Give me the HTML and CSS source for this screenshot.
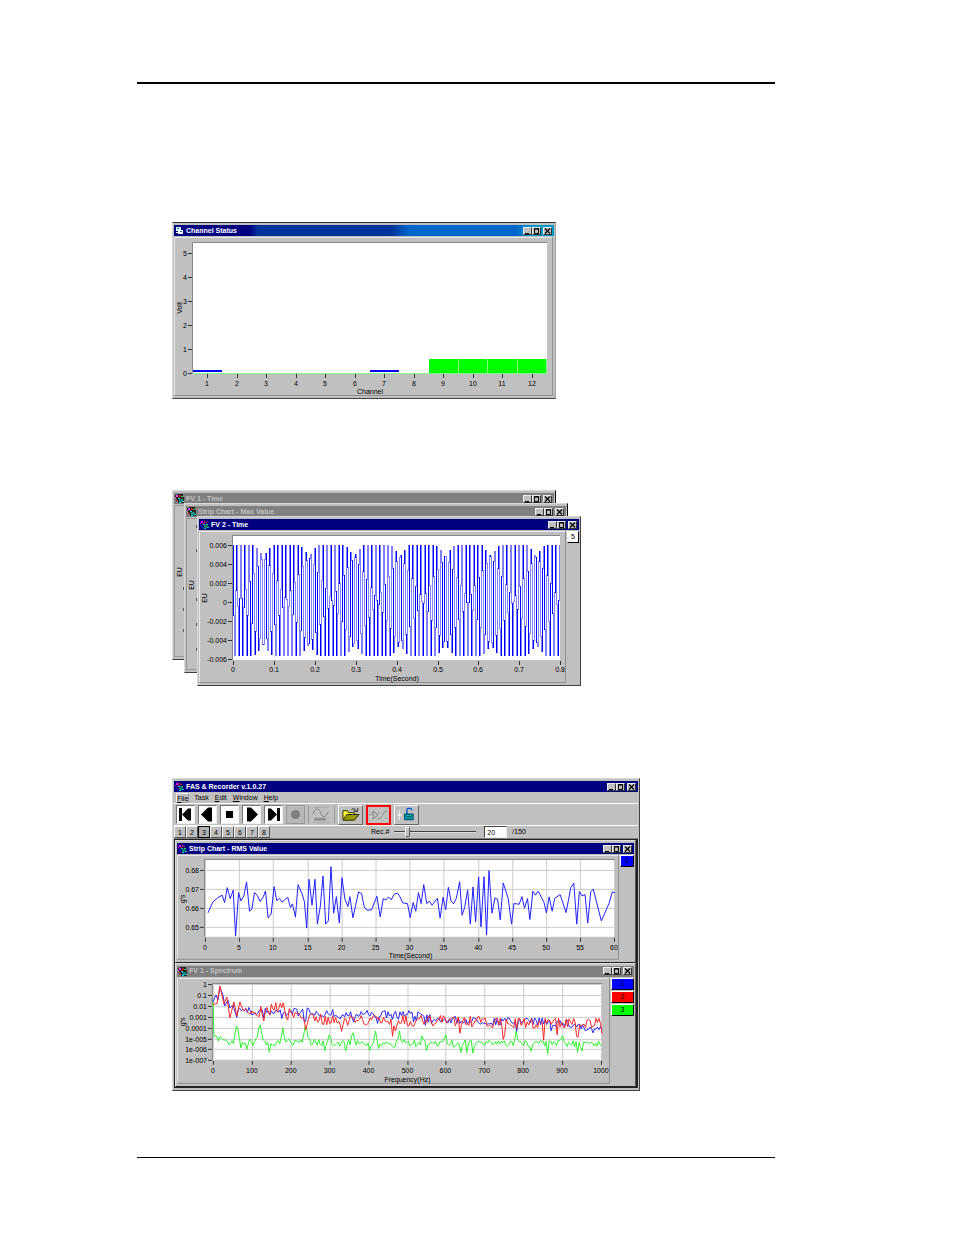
FILE: index.html
```html
<!DOCTYPE html>
<html lang="en">
<head>
<meta charset="utf-8">
<title>FAS &amp; Recorder displays</title>
<link rel="stylesheet" href="styles.css">
</head>
<body>
<svg width="0" height="0" class="symbols" aria-hidden="true">
  <symbol id="app" viewBox="0 0 9 9">
    <path d="M1 1h2v2H1zM0 3h1v1H0z" fill="#f0f"/><path d="M4 1l3 2M3 4l2-2" stroke="#d22" fill="none"/>
    <path d="M4 5h4v3H4z" fill="#066"/><path d="M3 4h2v1H3zM7 7h2v1H7zM4 8h2v1H4z" fill="#0cc"/><path d="M6 4h2v1H6zM5 6h1v1H5z" fill="#0c6"/><path d="M1 5l2 3" stroke="#22c" fill="none"/>
  </symbol>
  <symbol id="app-dim" viewBox="0 0 9 9">
    <path d="M2 0h6v3h1v6H3V7H1V4H0V1h2z" fill="#222"/><path d="M1 1h2v2H1zM0 3h1v1H0z" fill="#f4f"/><path d="M4 1l3 2M3 4l2-2" stroke="#e22" fill="none"/>
    <path d="M4 5h4v3H4z" fill="#088"/><path d="M3 4h2v1H3zM7 7h2v1H7zM4 8h2v1H4z" fill="#0dd"/><path d="M6 2h2v1H6z" fill="#0c6"/><path d="M1 5l2 3" stroke="#e44" fill="none"/>
  </symbol>
  <symbol id="sheet" viewBox="0 0 9 9"><path d="M1 1h5v4H1z" fill="#dff"/><path d="M3 4h5v4H3z" fill="#fff"/><path d="M2 2h2v1H2zM5 5h2v1H5z" fill="#088"/><path d="M1 6h2v1H1z" fill="#fff"/></symbol>
  <symbol id="min" viewBox="0 0 7 6"><path d="M1 5.500h4" stroke="#000"/></symbol>
  <symbol id="max" viewBox="0 0 7 6"><path d="M1.500 .5h4v5h-4zM1 1h5" fill="none" stroke="#000"/></symbol>
  <symbol id="close" viewBox="0 0 7 6"><path d="M1 .5l5 5M6 .5l-5 5" stroke="#000" stroke-width="1.200"/></symbol>
</svg>

<main class="page">
  <section class="window first">
    <header class="title wide-blue"><svg class="ico"><use href="#sheet"/></svg><h2>Channel Status</h2><span class="controls"></span></header>
    <div class="body"><svg class="chart" id="channels" viewBox="0 0 380 160" role="img" aria-label="Channel status"></svg></div>
  </section>

  <div class="stack">
    <section class="window back">
      <header class="title dim"><svg class="ico"><use href="#app-dim"/></svg><h2>FV 1 - Time</h2><span class="controls"></span></header>
      <div class="body"><svg class="chart" id="back1" viewBox="0 0 380 153" aria-hidden="true"></svg></div>
    </section>
    <section class="window back middle">
      <header class="title dim"><svg class="ico"><use href="#app-dim"/></svg><h2>Strip Chart - Max Value</h2><span class="controls"></span></header>
      <div class="body"><svg class="chart" id="back2" viewBox="0 0 380 153" aria-hidden="true"></svg></div>
    </section>
    <section class="window front">
      <header class="title"><svg class="ico"><use href="#app"/></svg><h2>FV 2 - Time</h2><span class="controls"></span></header>
      <div class="body"><svg class="chart" id="time" viewBox="0 0 368 153" role="img" aria-label="Time signal"></svg>
        <div class="legend slim"><button class="white">5</button></div></div>
    </section>
  </div>

  <section class="window recorder">
    <header class="title"><svg class="ico"><use href="#app"/></svg><h1>FAS &amp; Recorder v.1.0.27</h1><span class="controls"></span></header>
    <nav class="menu"><button class="on"><u>F</u>ile</button><button>Task</button><button><u>E</u>dit</button><button><u>W</u>indow</button><button><u>H</u>elp</button></nav>
    <div class="toolbar">
      <button class="play" aria-label="First"><svg viewBox="0 0 17 17"><path d="M2 2h3v13H2zM5 8.500l6-6h3v12h-3z"/></svg></button>
      <button class="play" aria-label="Back"><svg viewBox="0 0 17 17"><path d="M2 8.500l7-7h4v14H9z"/></svg></button>
      <button class="play" aria-label="Stop"><svg viewBox="0 0 17 17"><path d="M5 5h7v7H5z"/></svg></button>
      <button class="play" aria-label="Forward"><svg viewBox="0 0 17 17"><path d="M15 8.500l-7-7H4v14h4z"/></svg></button>
      <button class="play" aria-label="Last"><svg viewBox="0 0 17 17"><path d="M12 2h3v13h-3zM12 8.500l-6-6H3v12h3z"/></svg></button>
      <button class="play off" aria-label="Record"><svg viewBox="0 0 17 17"><circle cx="8.500" cy="8.500" r="4.600" fill="#808080"/></svg></button>
      <button class="scope" aria-label="Scope"><svg viewBox="0 0 26 19"><path d="M4 1.500h17M4 17.500h17" stroke="#aaa"/><path d="M4 9c2-7 6-8 8-2s5 6 8-1M6 13h2v2H6zM9 13h2v2H9zM12 13h2v2h-2zM15 13h2v2h-2z" fill="none" stroke="#808080"/></svg></button>
      <button class="tool" aria-label="Open"><svg viewBox="0 0 24 19"><path d="M4 14V5h5l1 2h6v3" fill="#ff3" stroke="#220"/><path d="M4 15l4-6h13l-5 6z" fill="#990" stroke="#220"/><path d="M13 4c2-2 4-1 5 1M20 2l-1 4-4-1" fill="none" stroke="#222"/></svg></button>
      <button class="tool red" aria-label="Clear"><svg viewBox="0 0 21 16"><path d="M1 8h4M5 4l5 4-5 4zM10 6c4 0 4 6 9 6M10 12c4 0 5-8 9-8" fill="none" stroke="#808080"/><path d="M2 9h3M11 7c4 0 4 6 8 6" stroke="#fff" fill="none" stroke-width=".6"/></svg></button>
      <button class="tool" aria-label="Unlock"><svg viewBox="0 0 24 19"><path d="M4.500 4v11M2 9.500h5" stroke="#eee"/><circle cx="4.500" cy="9.500" r="1.500" fill="#eee"/><path d="M12.500 9V4q0-1.500 2-1.500h1q2 0 2 2" fill="none" stroke="#05c" stroke-width="1.500"/><path d="M10 8.500h9v6h-9z" fill="#0aa" stroke="#036"/><path d="M12 11.500h5" stroke="#035"/></svg></button>
    </div>
    <div class="records">
      <div class="tabs"><button>1</button><button>2</button><button class="on">3</button><button>4</button><button>5</button><button>6</button><button>7</button><button>8</button></div>
      <label class="rec" for="pos">Rec.#</label>
      <input type="range" id="pos" min="0" max="150" value="20">
      <input type="text" class="num" value="20" aria-label="Record number"><span>/150</span>
    </div>
    <div class="workspace">
      <section class="window child">
        <header class="title"><svg class="ico"><use href="#app"/></svg><h2>Strip Chart - RMS Value</h2><span class="controls"></span></header>
        <div class="body"><svg class="chart" id="strip" viewBox="0 0 444 106" role="img" aria-label="RMS value"></svg>
          <div class="legend mid"><button class="blue">1</button></div></div>
      </section>
      <section class="window child">
        <header class="title dim"><svg class="ico"><use href="#app-dim"/></svg><h2>FV 1 - Spectrum</h2><span class="controls"></span></header>
        <div class="body"><svg class="chart" id="spectrum" viewBox="0 0 435 107" role="img" aria-label="Spectrum"></svg>
          <div class="legend large"><button class="blue">1</button><button class="red">2</button><button class="green">3</button></div></div>
      </section>
    </div>
  </section>
</main>
<script src="charts.js"></script>
</body>
</html>
```
FILE: styles.css
```css
* { box-sizing: border-box; }
body { margin: 0; background: #fff; color: #000; font: 7px/8px "Liberation Sans", Arial, sans-serif; }
h1, h2 { margin: 0; font: inherit; }
button, input { margin: 0; padding: 0; font: inherit; color: inherit; border: 0; background: none; border-radius: 0; }
svg { display: block; }
.symbols { position: absolute; }

.page { margin: 82px 179px 76px 137px; padding: 138px 0 66px 35px; border-top: 2px solid #000; border-bottom: 1px solid #000; }

.window { width: 100%; max-width: 384px; padding: 2px 1px 1px; background: #c0c0c0; border: 1px solid; border-color: #d8d8d8 #404040 #404040 #d8d8d8; }
.first { border-top-color: #303030; border-right-color: #a0a0a0; }
.title { display: flex; align-items: center; height: 12px; padding: 0 2px 0 1px; gap: 2px; color: #fff; background: #000080; border-bottom: 1px solid #c0c0c0; font-weight: bold; }
.title.wide-blue { background: linear-gradient(90deg, #000080 20%, #003399 22%, #003399 57%, #0066cc 62%, #0066cc 90%, #0099cc 94%); }
.title.dim { background: #808080; color: #c0c0c0; }
.ico { width: 9px; height: 9px; flex: none; }
.controls { display: flex; margin-left: auto; }
.controls button { width: 9px; height: 8px; background: #c0c0c0; border: 1px solid; border-color: #eee #333 #333 #eee; }
.controls button svg { width: 7px; height: 6px; }
.controls button:last-child { margin-left: 2px; }
.body { display: flex; align-items: flex-start; }
.chart { flex: 1; min-width: 0; }
.chart text { font: 7px "Liberation Sans", Arial, sans-serif; fill: #000; }

.legend { flex: none; display: grid; gap: 1px; }
.legend button { height: 12px; border: 1px solid; border-color: #fff #000 #000 #fff; }
.legend .white { background: #fff; }
.legend .blue { background: #00f; }
.legend .red { background: #f00; }
.legend .green { background: #0f0; }
.slim { width: 12px; }
.mid { width: 14px; }
.large { width: 23px; }

.stack { display: grid; justify-items: start; margin-top: 91px; }
.stack .window { grid-area: 1 / 1; align-self: start; }
.stack .back { border-right-color: #000; }
.stack .middle { margin: 13px 0 0 12px; }
.stack .front { margin: 26px 0 0 25px; }

.recorder { max-width: 468px; margin-top: 92px; }
.menu { display: flex; gap: 4px; height: 11px; padding: 0 2px; border-bottom: 1px solid #fff; }
.menu button { padding: 0 1px; }
.menu .on { border: 1px solid; border-color: #eee #999 #999 #eee; line-height: 7px; padding: 0; }
.toolbar { display: flex; gap: 3px; height: 22px; padding: 1px 2px; border-bottom: 1px solid #fff; }
.play { width: 19px; height: 19px; background: #fff; border: 1px solid; border-color: #777 #eee #eee #777; }
.play svg { width: 17px; height: 17px; }
.play.off { background: #b8b8b8; border-color: #999; }
.scope { width: 27px; border: 1px solid; border-color: #c0c0c0 #999; }
.scope svg { width: 25px; height: 18px; }
.tool { width: 25px; height: 20px; border: 1px solid; border-color: #f4f4f4 #666 #666 #f4f4f4; }
.tool svg { width: 23px; height: 18px; }
.tool.red { border: 2px solid #f00; }
.tool.red svg { width: 21px; height: 16px; }

.records { display: flex; align-items: center; height: 13px; border-bottom: 1px solid #808080; }
.tabs { display: flex; flex: none; }
.tabs button { width: 12px; height: 12px; border: 1px solid; border-color: #f4f4f4 #555 #555 #f4f4f4; line-height: 9px; }
.tabs .on { border-color: #000; background: #b0b0b0; }
.rec { margin-left: 101px; }
input[type=range] { appearance: none; width: 82px; height: 10px; margin: 0 8px 0 5px; background: linear-gradient(#444 50%, #ddd 50%) center / 100% 2px no-repeat; }
input[type=range]::-webkit-slider-thumb { appearance: none; width: 5px; height: 10px; background: #c0c0c0; border: 1px solid; border-color: #eee #555 #555 #eee; border-radius: 0 0 2px 2px; }
.num { width: 23px; height: 12px; margin-right: 5px; padding: 0 2px; background: #fff; border: 1px solid; border-color: #444 #eee #eee #444; }
.workspace { border: 1px solid #222; border-right-width: 2px; margin-bottom: 1px; }
.child { max-width: none; border-color: #e0e0e0 #555 #222 #e0e0e0; }
```
FILE: charts.js
```js
const NS = 'http://www.w3.org/2000/svg';

function add(svg, tag, attrs, text) {
  const el = document.createElementNS(NS, tag);
  for (const k in attrs) el.setAttribute(k, attrs[k]);
  if (text !== undefined) el.textContent = text;
  svg.appendChild(el);
}

// Panel, plot area, axis ticks and optional grid.
function frame(svg, c) {
  const [w, h] = svg.getAttribute('viewBox').split(' ').slice(2).map(Number);
  add(svg, 'path', { d: `M.5 ${h}V.5H${w}`, stroke: '#e8e8e8', fill: 'none' });
  add(svg, 'path', { d: `M${w - 1.5} 0V${h - 1.5}H0`, stroke: '#909090', fill: 'none' });
  add(svg, 'rect', { x: c.x0, y: c.y0, width: c.x1 - c.x0, height: c.y1 - c.y0, fill: '#fff' });
  add(svg, 'path', { d: `M${c.x0 - .5} ${c.y1}V${c.y0 - .5}H${c.x1}`, stroke: '#888', fill: 'none' });
  c.ys.forEach(([y, label]) => {
    if (c.grid) add(svg, 'path', { d: `M${c.x0} ${y}H${c.x1}`, stroke: '#ccc' });
    add(svg, 'path', { d: `M${c.x0 - 5} ${y}h4`, stroke: '#333' });
    add(svg, 'text', { x: c.x0 - 6, y: y + 2.5, 'text-anchor': 'end' }, label);
  });
  c.xs.forEach(([x, label]) => {
    if (c.grid) add(svg, 'path', { d: `M${x} ${c.y0}V${c.y1}`, stroke: '#ccc' });
    add(svg, 'path', { d: `M${x} ${c.y1 + 1}v4`, stroke: '#333' });
    add(svg, 'text', { x: x - .5, y: c.y1 + c.drop, 'text-anchor': 'middle' }, label);
  });
  add(svg, 'text', { x: c.tx, y: h - 3, 'text-anchor': 'middle' }, c.xt);
  add(svg, 'text', { transform: `translate(${c.yx} ${c.yy}) rotate(-90)`, 'text-anchor': 'middle' }, c.yt);
}

const steps = (labels, start, step) => labels.map((l, i) => [start + Math.round(i * step), l]);

// Channel status bars
const ch = document.getElementById('channels');
frame(ch, { x0: 19, y0: 6, x1: 373, y1: 136, drop: 13, ys: steps([0, 1, 2, 3, 4, 5], 136.5, -24),
  xs: steps([1, 2, 3, 4, 5, 6, 7, 8, 9, 10, 11, 12], 33.5, 29.5), xt: 'Channel', tx: 196, yt: 'Volt', yx: 8, yy: 71 });
add(ch, 'path', { d: 'M19 136.5H373', stroke: '#80ff80' });
[1, 7].forEach(n => add(ch, 'rect', { x: 19 + 29.5 * (n - 1), y: 133, width: 29, height: 2, fill: '#00f' }));
[9, 10, 11, 12].forEach(n => add(ch, 'rect', { x: 19 + 29.5 * (n - 1), y: 122, width: 29, height: 14, fill: '#0f0' }));

// Partly covered windows
[['back1', 10, [82, 103, 124]], ['back2', 11, [7, 31, 80, 105, 130]]].forEach(([id, x, ys]) => {
  const svg = document.getElementById(id);
  add(svg, 'path', { d: 'M.5 153V.5H380M379 0V151.500H0', stroke: '#999', fill: 'none' });
  add(svg, 'text', { transform: 'translate(8 67) rotate(-90)', 'text-anchor': 'middle' }, 'EU');
  ys.forEach(y => add(svg, 'path', { d: `M${x - .5} ${y}v3`, stroke: '#555' }));
});

// Time signal: one vertical run per column
const tm = document.getElementById('time');
frame(tm, { x0: 34, y0: 5, x1: 361, y1: 129, drop: 12,
  ys: steps(['0.006', '0.004', '0.002', '0', '-0.002', '-0.004', '-0.006'], 14.5, 19),
  xs: steps(['0', '0.1', '0.2', '0.3', '0.4', '0.5', '0.6', '0.7', '0.8'], 34.5, 40.9), xt: 'Time(Second)', tx: 198, yt: 'EU', yx: 8, yy: 67 });
const wave = x => 69 - 55 * Math.max(-1, Math.min(1, 1.12 * Math.sin((x + 1.2) * 2 * Math.PI / 4.09)));
for (let x = 0; x < 327; x++) {
  const a = wave(x), b = wave(x + 1);
  const top = Math.round(Math.min(a, b)), bottom = Math.round(Math.max(a, b)) + 1;
  add(tm, 'rect', { x: 34 + x, y: top, width: 1, height: bottom - top, fill: (x * .37) % 1 < .35 ? '#0000ff' : '#8080ff' });
}

// RMS strip chart, in thirds of a pixel
const st = document.getElementById('strip');
frame(st, { x0: 28, y0: 5, x1: 439, y1: 82, drop: 13, grid: true, ys: steps(['0.68', '0.67', '0.66', '0.65'], 15.5, 19),
  xs: steps([0, 5, 10, 15, 20, 25, 30, 35, 40, 45, 50, 55, 60], 28.5, 34.2), xt: 'Time(Second)', tx: 234, yt: "g's", yx: 8, yy: 44 });
const left = '120,231 135,198 150,185 163,178 170,200 178,155 187,188 196,163 203,301 212,170 219,195 228,180 236,138 245,226 252,220 260,170 268,178 277,197 286,184 293,165 301,246 310,235 319,152 327,195 335,187 343,199 360,184 368,215 374,204 383,244 391,146 403,173 410,198 417,277 424,130 433,208 442,130 449,265 458,210 466,120 474,265 482,255 490,92 498,232 506,182 515,262 523,125 532,190 541,212 547,182 556,246 565,205 573,168 582,173 590,213 598,223 612,222 628,181 638,243 647,188 655,192 663,183 671,192 680,175 690,172';
const right = '0,180 10,201 24,203 32,245 41,200 49,226 57,170 65,203 73,146 82,203 90,196 98,208 114,187 122,247 131,184 139,222 147,154 155,196 163,203 171,187 181,137 188,238 196,215 205,162 213,265 221,153 229,258 238,123 245,273 254,122 262,298 269,104 278,232 287,186 295,190 303,252 312,141 327,188 337,265 344,203 360,205 368,182 376,217 385,188 392,251 401,166 409,178 417,166 434,198 442,231 450,183 459,226 467,187 483,176 501,230 515,155 524,142 533,265 541,167 549,180 558,176 566,262 575,167 583,160 607,255 630,203 640,168 648,170';
const pts = (s, dx) => s.split(' ').map(p => p.split(',').map(Number)).map(([x, y]) => [(x + dx) / 3 - 9, y / 3 - 19]);
const line = (svg, p, stroke) => add(svg, 'polyline', { points: p.map(q => q[0].toFixed(1) + ',' + q[1].toFixed(1)).join(' '), stroke, fill: 'none', 'stroke-width': 1 });
line(st, pts(left, 0).concat(pts(right, 696)), '#2020ff');

// Spectrum: smooth trend plus repeatable noise
const sp = document.getElementById('spectrum');
frame(sp, { x0: 36, y0: 6, x1: 426, y1: 82, drop: 13, grid: true,
  ys: steps(['1', '0.1', '0.01', '0.001', '0.0001', '1e-005', '1e-006', '1e-007'], 6.5, 10.9),
  xs: steps([0, 100, 200, 300, 400, 500, 600, 700, 800, 900, 1000], 36.5, 38.9), xt: 'Frequency(Hz)', tx: 231, yt: "g's", yx: 8, yy: 44 });
let seed = 7;
const rnd = () => (seed = (seed * 16807) % 2147483647) / 2147483647;
function trend(k, x) {
  for (let i = 1; i < k.length; i++)
    if (x <= k[i][0]) return k[i - 1][1] + (k[i][1] - k[i - 1][1]) * (x - k[i - 1][0]) / (k[i][0] - k[i - 1][0]);
  return k[k.length - 1][1];
}
function noisy(k, spread, dip, from) {
  const p = k.filter(q => q[0] < from);
  for (let x = from; x <= 426; x += 1.5) {
    const r = rnd();
    p.push([x, trend(k, x) + (rnd() - .5) * spread + (r > .88 ? dip * rnd() : 0)]);
  }
  return p;
}
const blue = noisy([[36, 24], [39, 17], [41, 22], [43, 9], [46, 17], [48, 28], [51, 22], [53, 30], [56, 27], [60, 36], [63, 30], [70, 33], [90, 34], [130, 34], [170, 36], [230, 37], [242, 35], [270, 42], [300, 43], [370, 44], [400, 47], [415, 52], [426, 52]], 8, 8, 60);
const red = noisy([[36, 26], [40, 26], [43, 8], [47, 26], [50, 19], [53, 40], [57, 24], [60, 38], [63, 24], [66, 36], [75, 33], [90, 33], [103, 28], [115, 35], [130, 41], [160, 42], [230, 43], [280, 43], [330, 46], [400, 45], [426, 46]], 11, 14, 66);
const green = noisy([[36, 24], [37, 58], [50, 64], [200, 65], [426, 66]], 7, 8, 40);
[[60, 45], [83, 44], [106, 50], [129, 45], [153, 54], [176, 52], [199, 53], [223, 53], [246, 55], [269, 54], [293, 60], [340, 53], [386, 55]].forEach(([x, y]) =>
  green.forEach(q => { const d = Math.abs(q[0] - x); if (d < 3) q[1] = Math.min(q[1], y + d * 6); }));
line(sp, green, '#30f030');
line(sp, blue, '#2828f8');
line(sp, red, '#f82828');

// Window controls
document.querySelectorAll('.controls').forEach(box => {
  [['min', 'Minimize'], ['max', 'Maximize'], ['close', 'Close']].forEach(([id, name]) => {
    box.insertAdjacentHTML('beforeend', `<button aria-label="${name}"><svg viewBox="0 0 7 6"><use href="#${id}"/></svg></button>`);
  });
});
```
